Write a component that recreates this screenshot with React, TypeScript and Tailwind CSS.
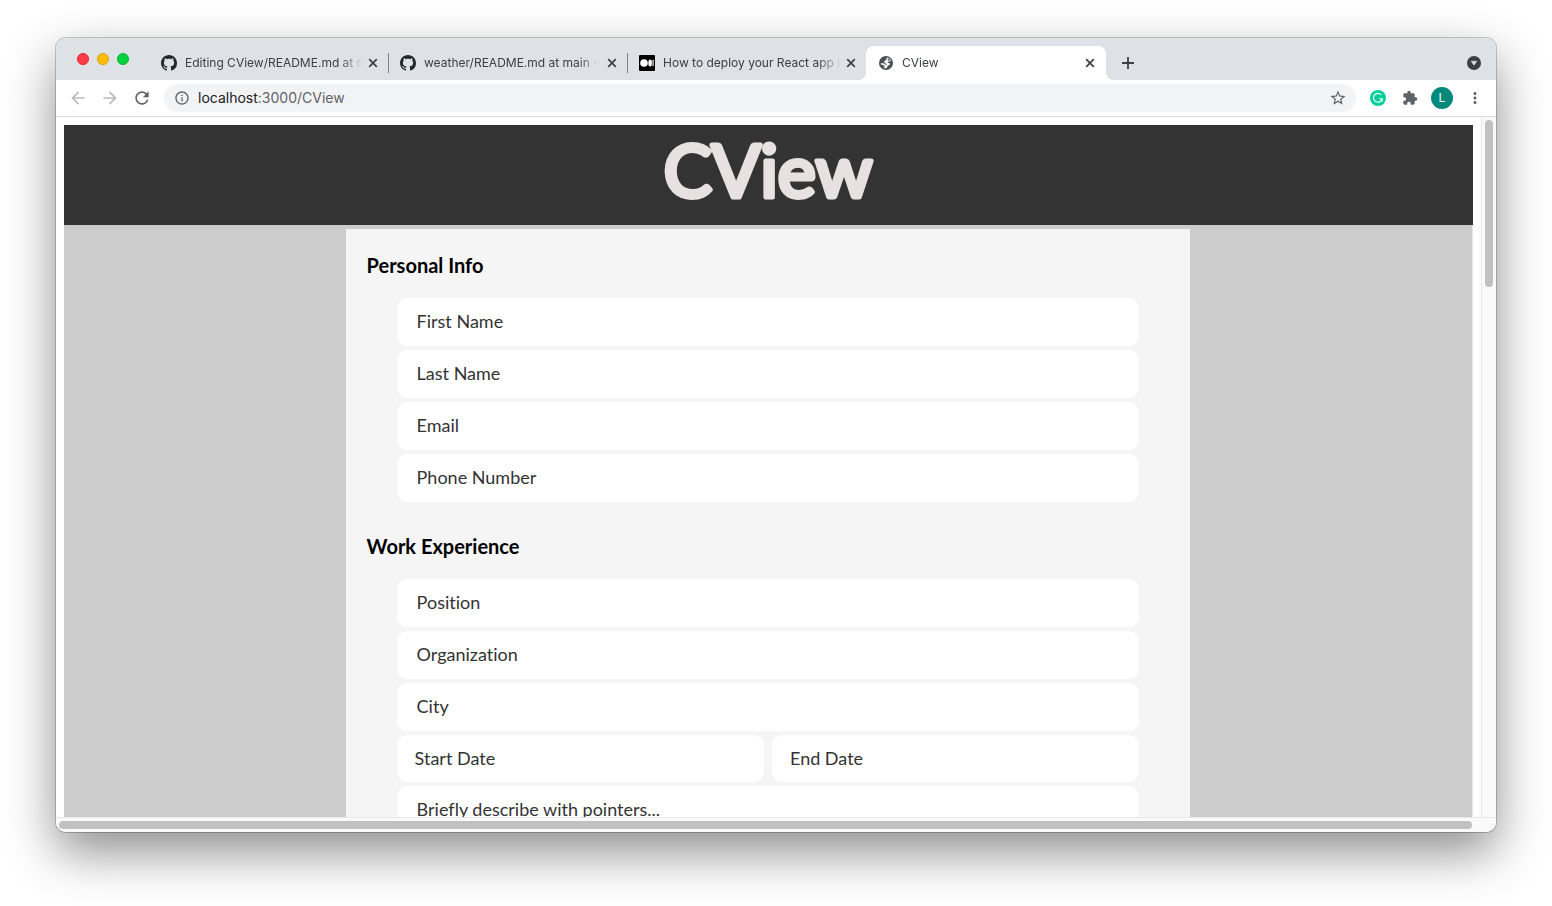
import React from "react";
import {
  MdArrowBack,
  MdArrowForward,
  MdExtension,
  MdInfoOutline,
  MdMoreVert,
  MdRefresh,
  MdStarBorder,
} from "react-icons/md";

function GithubIcon() {
  return (
    <svg viewBox="0 0 16 16" className="size-4 shrink-0 fill-[#24292f]" aria-hidden="true">
      <path d="M8 0C3.58 0 0 3.58 0 8c0 3.54 2.29 6.53 5.47 7.59.4.07.55-.17.55-.38 0-.19-.01-.82-.01-1.49-2.01.37-2.53-.49-2.69-.94-.09-.23-.48-.94-.82-1.13-.28-.15-.68-.52-.01-.53.63-.01 1.08.58 1.23.82.72 1.21 1.87.87 2.33.66.07-.52.28-.87.51-1.07-1.78-.2-3.64-.89-3.64-3.95 0-.87.31-1.59.82-2.15-.08-.2-.36-1.02.08-2.12 0 0 .67-.21 2.2.82.64-.18 1.32-.27 2-.27s1.36.09 2 .27c1.53-1.04 2.2-.82 2.2-.82.44 1.1.16 1.92.08 2.12.51.56.82 1.27.82 2.15 0 3.07-1.87 3.75-3.65 3.95.29.25.54.73.54 1.48 0 1.07-.01 1.93-.01 2.2 0 .21.15.46.55.38A8.01 8.01 0 0 0 16 8c0-4.42-3.58-8-8-8Z" />
    </svg>
  );
}

function MediumIcon() {
  return (
    <svg viewBox="0 0 16 16" className="size-4 shrink-0" aria-hidden="true">
      <rect width="16" height="16" rx="1" fill="#000" />
      <circle cx="5" cy="8" r="3.8" fill="#fff" />
      <ellipse cx="11.1" cy="8" rx="1.8" ry="3.6" fill="#fff" />
      <rect x="13.5" y="4.8" width="1.1" height="6.4" rx="0.5" fill="#fff" />
    </svg>
  );
}

function GlobeIcon() {
  return (
    <svg viewBox="0 0 16 16" className="size-4 shrink-0" aria-hidden="true">
      <circle cx="8" cy="8" r="7" fill="#4a4d51" />
      <path
        d="M9 2.6C11.2 2.9 12.6 4 13.2 6L11.2 6.4 9.6 6.6 9.8 7.6 11.8 8.4 11.6 10 9.8 10.6 9 12.6 7.4 13.4C4.9 13 3 11.2 2.6 8.2L5.6 8.2 7.4 9.4 7.8 10.4 8.8 9.4 7.4 8.2 6.2 7.2 6.4 5.8 8 5.2 8.4 4z"
        fill="#fff"
      />
      <path d="M9.2 4.6L10.8 3.6 12.8 5.6 10.4 5.6zM2.8 9.6L5.4 10 6.6 11.6 6.4 13.2C4.6 12.6 3.3 11.4 2.8 9.6z" fill="#4a4d51" />
    </svg>
  );
}

function GrammarlyIcon() {
  return (
    <svg viewBox="0 0 16 16" className="size-4" aria-hidden="true">
      <circle cx="8" cy="8" r="8" fill="#00cf9c" />
      <path
        d="M11.3 5A4.4 4.4 0 1 0 12.2 8.7H9M12.2 8.7V11.4"
        fill="none"
        stroke="#fff"
        strokeWidth="1.1"
      />
    </svg>
  );
}

function SearchTabsIcon() {
  return (
    <svg viewBox="0 0 14 14" className="size-3.5" aria-hidden="true">
      <circle cx="7" cy="7" r="7" fill="#3c4043" />
      <path d="M4.2 5.2h5.6L7 9.2z" fill="#dee1e6" stroke="#dee1e6" strokeWidth="0.6" strokeLinejoin="round" />
    </svg>
  );
}

function CloseIcon() {
  return (
    <svg viewBox="0 0 10 10" className="size-2.5" fill="none" stroke="currentColor" strokeWidth="1.7" aria-hidden="true">
      <path d="M1.2 1.2l7.6 7.6M8.8 1.2L1.2 8.8" />
    </svg>
  );
}

function PlusIcon() {
  return (
    <svg viewBox="0 0 12 12" className="size-3" fill="none" stroke="currentColor" strokeWidth="1.8" aria-hidden="true">
      <path d="M6 0v12M0 6h12" />
    </svg>
  );
}

type TabProps = { icon: React.ReactNode; title: string; active?: boolean };

function Tab({ icon, title, active = false }: TabProps) {
  return (
    <div
      className={
        active
          ? "relative flex h-[34px] w-60 items-center rounded-t-lg bg-white pl-3 pr-[11px]"
          : "relative flex h-[34px] w-[239px] items-center pl-3 pr-2.5"
      }
    >
      {active && (
        <>
          <span className="absolute -left-2 bottom-0 size-2 bg-[radial-gradient(circle_at_0_0,#dee1e6_8px,#fff_8px)]" />
          <span className="absolute -right-2 bottom-0 size-2 bg-[radial-gradient(circle_at_100%_0,#dee1e6_8px,#fff_8px)]" />
        </>
      )}
      {icon}
      <span className="ml-2 min-w-0 flex-1 whitespace-nowrap text-xs text-[#3c4043] [mask-image:linear-gradient(to_right,#000_154px,transparent_178px)]">
        {title}
      </span>
      <button aria-label={`Close ${title}`} className="ml-1 text-[#3c4043]">
        <CloseIcon />
      </button>
    </div>
  );
}

function Separator() {
  return <span className="-mr-px h-5 w-px shrink-0 bg-[#808388]" />;
}

function Field({ label }: { label: string }) {
  return (
    <input
      aria-label={label}
      placeholder={label}
      className="block h-12 w-full rounded-[10px] bg-white px-5 pb-0.5 text-lg text-[#333] outline-none placeholder:text-[#333] placeholder:opacity-100"
    />
  );
}

function DateField({ label }: { label: string }) {
  return (
    <input
      aria-label={label}
      placeholder={label}
      className="block h-[47px] w-full min-w-0 rounded-[10px] bg-white px-[18px] pb-0.5 text-lg text-[#333] outline-none placeholder:text-[#333] placeholder:opacity-100"
    />
  );
}

function Section({ title, children }: { title: string; children: React.ReactNode }) {
  return (
    <section>
      <h2 className="mb-5 text-xl font-bold leading-[26px] text-black">{title}</h2>
      <div className="mx-[30px] flex flex-col gap-1">{children}</div>
    </section>
  );
}

export default function App() {
  return (
    <div className="flex h-screen flex-col overflow-hidden bg-white px-14 pb-[74px] pt-[38px] font-['Inter',sans-serif]">
      <div className="flex min-h-0 flex-1 flex-col overflow-hidden rounded-[10px] bg-white shadow-[0_0_0_1px_rgba(0,0,0,0.2),0_20px_50px_rgba(0,0,0,0.45)]">
        <div className="flex h-[42px] shrink-0 items-end bg-[#dee1e6] pr-[15px]">
          <div className="mb-[15px] ml-[21px] mr-5 flex gap-2">
            <button aria-label="Close window" className="size-3 rounded-full border border-[#e0242f] bg-[#ff3b47]" />
            <button aria-label="Minimize window" className="size-3 rounded-full border border-[#e0a000] bg-[#ffbd05]" />
            <button aria-label="Zoom window" className="size-3 rounded-full border border-[#00b531] bg-[#00d43c]" />
          </div>
          <nav aria-label="Tabs" className="flex items-center">
            <Tab icon={<GithubIcon />} title="Editing CView/README.md at m" />
            <Separator />
            <Tab icon={<GithubIcon />} title="weather/README.md at main ·" />
            <Separator />
            <Tab icon={<MediumIcon />} title="How to deploy your React app i" />
            <Tab icon={<GlobeIcon />} title="CView" active />
          </nav>
          <button aria-label="New tab" className="mb-[11px] ml-4 text-[#3c4043]">
            <PlusIcon />
          </button>
          <button aria-label="Search tabs" className="mb-2.5 ml-auto">
            <SearchTabsIcon />
          </button>
        </div>

        <div className="flex h-[37px] shrink-0 items-center border-b border-[#dadce0] px-3">
          <div className="flex gap-3 pr-3">
            <button aria-label="Back" className="text-[#babcbe]">
              <MdArrowBack className="size-5" />
            </button>
            <button aria-label="Forward" className="text-[#babcbe]">
              <MdArrowForward className="size-5" />
            </button>
            <button aria-label="Reload" className="text-[#5f6368]">
              <MdRefresh className="size-5" />
            </button>
          </div>
          <div className="flex h-7 flex-1 items-center rounded-full bg-[#f1f3f4] pl-2.5 pr-[9px] text-[#5f6368]">
            <MdInfoOutline className="size-4" />
            <a href="#cview" className="ml-2 text-sm">
              <span className="text-[#202124]">localhost</span>:3000/CView
            </a>
            <button aria-label="Bookmark this page" className="ml-auto">
              <MdStarBorder className="size-[18px]" />
            </button>
          </div>
          <div className="ml-3.5 flex items-center">
            <button aria-label="Grammarly">
              <GrammarlyIcon />
            </button>
            <button aria-label="Extensions" className="ml-4 text-[#5f6368]">
              <MdExtension className="size-4" />
            </button>
            <button
              aria-label="Profile"
              className="ml-[13px] flex size-[22px] items-center justify-center rounded-full bg-[#00897b] text-xs text-white"
            >
              L
            </button>
            <button aria-label="Menu" className="ml-[13px] text-[#5f6368]">
              <MdMoreVert className="size-[18px]" />
            </button>
          </div>
        </div>

        <div className="flex min-h-0 flex-1">
          <main
            id="cview"
            className="min-w-0 flex-1 overflow-hidden px-2 pt-2 font-['Lato',sans-serif] [font-variant-ligatures:no-common-ligatures]"
          >
            <header className="flex h-[100px] justify-center bg-[#333]">
              <h1 className="h-full w-[260px]">
                <svg viewBox="0 0 260 100" className="h-full w-full">
                  <text
                    x="129"
                    y="72"
                    textAnchor="middle"
                    fontSize="72"
                    fill="#e7e1e1"
                    stroke="#e7e1e1"
                    strokeWidth="5"
                    strokeLinejoin="round"
                    strokeLinecap="round"
                    className="[font-kerning:none]"
                  >
                    CView
                  </text>
                </svg>
              </h1>
            </header>
            <div className="border-r border-[#e5e5e5] bg-[#ccc] pt-1">
              <form className="mx-auto flex w-3/5 flex-col gap-[31px] bg-[#f5f5f5] px-[21px] pb-8 pt-[23px]">
                <Section title="Personal Info">
                  <Field label="First Name" />
                  <Field label="Last Name" />
                  <Field label="Email" />
                  <Field label="Phone Number" />
                </Section>
                <Section title="Work Experience">
                  <Field label="Position" />
                  <Field label="Organization" />
                  <Field label="City" />
                  <div className="grid grid-cols-2 gap-2">
                    <DateField label="Start Date" />
                    <DateField label="End Date" />
                  </div>
                  <Field label="Briefly describe with pointers..." />
                </Section>
              </form>
            </div>
          </main>
          <div className="w-[15px] shrink-0 border-l border-[#e8e8e8] bg-[#fafafa] px-[3px] pt-[3px]">
            <div className="h-[167px] rounded-full bg-[#c1c1c1]" />
          </div>
        </div>
        <div className="h-[15px] shrink-0 border-t border-[#e8e8e8] bg-[#fafafa] pl-[3px] pr-6 pt-[3px]">
          <div className="h-2 rounded-full bg-[#c1c1c1]" />
        </div>
      </div>
    </div>
  );
}
